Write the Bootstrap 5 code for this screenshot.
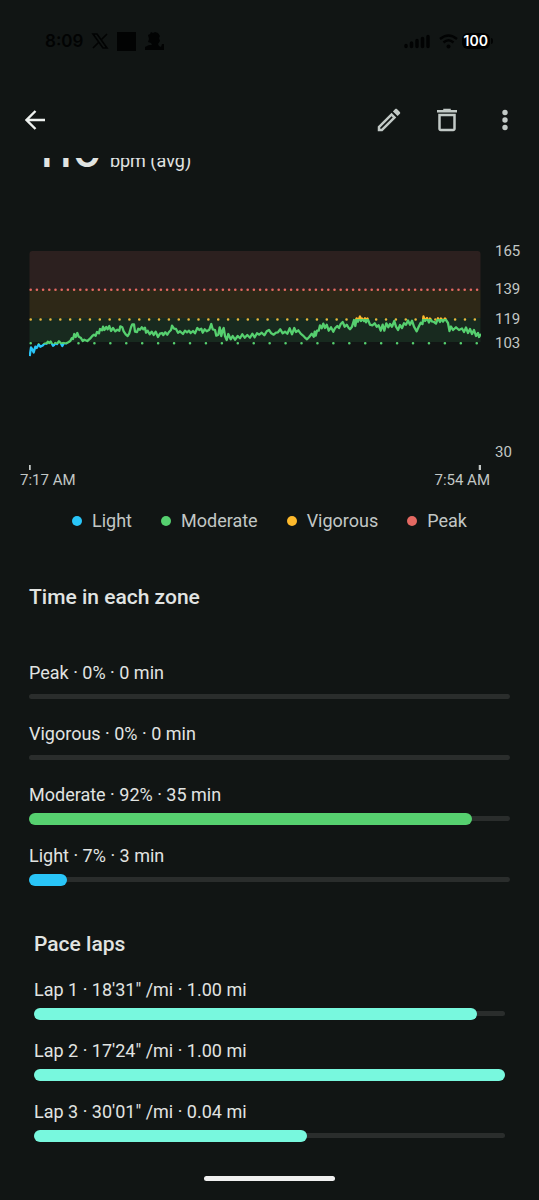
<!DOCTYPE html>
<html lang="en" data-bs-theme="dark">
<head>
<meta charset="utf-8">
<meta name="viewport" content="width=device-width, initial-scale=1">
<title>Heart rate</title>
<link href="https://cdn.jsdelivr.net/npm/bootstrap@5.3.0/dist/css/bootstrap.min.css" rel="stylesheet">
<style>
  body { background: #111514; color: #e1e4e2; font-family: Roboto, "Liberation Sans", sans-serif; font-size: 18px; line-height: 24px; }
  svg { display: block; }
  .status { height: 82px; padding: 0 46px 0 45px; color: #020303; }
  .clock { font: 600 17px/24px Inter, sans-serif; }
  .battery { background: #000; color: #fff; font: 600 14px/16px Inter, sans-serif; border-radius: 6px; padding: 0 2px; }
  .toolbar { height: 76px; padding: 0 19px 0 20px; color: #c2c9c6; }
  .toolbar .btn { color: inherit; border: 0; padding: 0; width: 30px; height: 30px; display: grid; place-items: center; }
  .toolbar .back { color: #eef1ef; }
  .toolbar .tools { gap: 28px; }
  .average { height: 24px; padding-left: 34px; }
  .average .value { font: 500 46px/64px Inter, sans-serif; }
  .chart { margin-top: 57px; color: #c2c7c5; font-size: 15px; }
  .plot { padding: 12px 0 0 29px; }
  .plot svg { width: 100%; height: 220px; }
  .scale { grid-template-rows: 38px 30px 24px 109px 24px; width: 58px; padding-left: 14px; }
  .times { padding: 0 49px 0 20px; line-height: 18px; }
  .legend-row { gap: 29px; margin-top: 20px; color: #c2c7c5; }
  .legend-row li { gap: 10px; }
  .dot { width: 10px; height: 10px; border-radius: 50%; }
  .zones { padding: 0 29px; margin-top: 52px; }
  .laps { padding: 0 34px; margin-top: 50px; }
  h2 { font-size: 21px; line-height: 24px; font-weight: 500; margin: 0; color: #e1e4e2; }
  .zones h2 { margin-bottom: 52px; }
  .laps h2 { margin-bottom: 22px; }
  .bars { gap: 23px; }
  .bars .progress { height: 5px; margin-top: 9px; overflow: visible; align-items: center; background: #2a2d2c; border-radius: 3px; }
  .bars .progress-bar { height: 12px; border-radius: 6px; }
  .light { background: #29c5f8; }
  .moderate { background: #56d06f; }
  .vigorous { background: #fdb92c; }
  .peak { background: #e46962; }
  .pace { background: #78f8de; }
  .home { width: 131px; height: 5px; border-radius: 3px; background: #f0f0f0; margin: 38px auto 19px; }
</style>
</head>
<body>
<div class="status d-flex align-items-center justify-content-between">
  <div class="d-flex align-items-center">
    <span class="clock me-2">8:09</span>
    <svg width="18" height="18" viewBox="0 0 18 18" class="me-2" aria-hidden="true"><path d="M2 2h4l10 14h-4zM16 2 10 8M8 10l-6 6" fill="none" stroke="currentColor" stroke-width="1.6"/></svg>
    <svg width="19" height="19" class="me-2" aria-hidden="true"><path d="M0 0h19v19H0z" fill="currentColor"/></svg>
    <svg width="20" height="20" viewBox="0 0 20 20" aria-hidden="true"><path d="M1 19v-3l4-2 3 0-1-2-3-1 1-3-1-4 2-1 1-2 2 1 2-1 3 1 2 3-1 2 1 3-2 3 1 2 2 1 1-3 2 0v6z" fill="currentColor"/></svg>
  </div>
  <div class="d-flex align-items-center">
    <svg width="27" height="15" viewBox="0 0 27 15" class="me-2" aria-hidden="true"><path d="M2 12.500v-1M7.500 12.500V9M13 12.500V6.500M18.500 12.500V4.500M24 12.500V2.500" stroke="currentColor" stroke-width="3.500" stroke-linecap="round"/></svg>
    <svg width="19" height="15" viewBox="0 0 19 15" class="me-1" aria-hidden="true"><path d="M1 5Q9.500-2 18 5M4.500 8.500Q9.500 4 14.500 8.500" fill="none" stroke="currentColor" stroke-width="2.400"/><circle cx="9.500" cy="12.500" r="2" fill="currentColor"/></svg>
    <span class="battery">100</span>
    <svg width="3" height="6" viewBox="0 0 3 6" aria-hidden="true"><path d="M1 0q2 0 2 3t-2 3z" fill="currentColor"/></svg>
  </div>
</div>

<header class="toolbar d-flex align-items-center justify-content-between">
  <button class="btn back" type="button" aria-label="Back"><svg width="20" height="20" viewBox="0 0 20 20"><path d="M20 10H2M10.500 1 1.500 10l9 9" fill="none" stroke="currentColor" stroke-width="2.400"/></svg></button>
  <div class="tools d-flex">
    <button class="btn" type="button" aria-label="Edit"><svg width="30" height="30" viewBox="0 0 24 24"><path fill="currentColor" d="m14.060 9.020.920.920L5.920 19H5v-.920zM17.660 3c-.250 0-.510.100-.700.290l-1.830 1.830 3.750 3.750 1.830-1.830a1 1 0 0 0 0-1.410l-2.340-2.340c-.200-.200-.450-.290-.710-.290m-3.600 3.190L3 17.250V21h3.750L17.810 9.940z"/></svg></button>
    <button class="btn" type="button" aria-label="Delete"><svg width="30" height="30" viewBox="0 0 24 24"><path fill="currentColor" d="M15 4V3H9v1H4v2h16V4zM5 7v12c0 1.100.900 2 2 2h10c1.100 0 2-.900 2-2V7zm2 2h10v10H7z"/></svg></button>
    <button class="btn" type="button" aria-label="More options"><svg width="8" height="22" viewBox="0 0 8 22"><g fill="currentColor"><circle cx="4" cy="3.500" r="2.700"/><circle cx="4" cy="11" r="2.700"/><circle cx="4" cy="18.500" r="2.700"/></g></svg></button>
  </div>
</header>

<main>
  <div class="average d-flex align-items-end overflow-hidden">
    <div class="d-flex align-items-baseline"><span class="value me-2">110</span><span>bpm (avg)</span></div>
  </div>

  <section class="chart" aria-label="Heart rate over time">
    <div class="d-flex">
      <div class="plot flex-grow-1">
        <svg viewBox="29 251 452 220" preserveAspectRatio="none" role="img" aria-label="Heart rate between 95 and 121 bpm">
          <defs>
            <linearGradient id="zone" gradientUnits="userSpaceOnUse" x1="0" y1="251" x2="0" y2="371">
              <stop offset=".570" stop-color="#fdb92c"/><stop offset=".570" stop-color="#56d06f"/>
              <stop offset=".773" stop-color="#56d06f"/><stop offset=".773" stop-color="#29c5f8"/>
            </linearGradient>
          </defs>
          <path d="M29.500 290V254q0-3 3-3h445q3 0 3 3v36z" fill="#2c201f"/>
          <path d="M29.500 290h451v28h-451z" fill="#2e2817"/>
          <path d="M29.500 318h451v24h-451z" fill="#182a1f"/>
          <g fill="none" stroke-width="2.600" stroke-linecap="round">
            <path d="M30.700 289.700H480" stroke="#e46962" stroke-dasharray="0 6.200"/>
            <path d="M30.700 319.500H480" stroke="#e9b53a" stroke-dasharray="0 9.870"/>
            <path d="M30.700 343.300H480" stroke="#56d06f" stroke-dasharray="0 15.930"/>
          </g>
          <polyline fill="none" stroke="url(#zone)" stroke-width="2.300" stroke-linejoin="round" points="29.7,356 31,347.300 32.300,349.300 33.700,352.500 35.300,346.700 36.700,348 38.700,344.300 40.300,346.700 42.700,345.500 44.300,343.700 46.700,343.500 47.700,341.700 49.300,343 50.700,341.500 53,345.700 54,345 55.300,343 57,344 59,341.300 60.700,343 62.300,346 64,343 66,343.500 68.300,342.300 70.300,341 71.700,338.300 73,339 74.300,334 75.700,337 77.300,333 78.700,336.700 80.700,337.700 82.700,341 84.300,339.700 87.300,341 90,338.700 92.300,336 94,334.700 95.700,335.700 97,332 99,333.300 100,329 102,330.300 103,326.700 104.300,330 106.300,327 107.700,329.300 109.300,326 111,331 113,328 115.300,331.300 117.300,329.700 119.300,330.700 120.300,326.300 122.300,327.300 123.700,331.300 125.700,334.300 127.700,336 129.300,333.300 131,327.300 132.300,324.300 134,324.300 135,331.700 137,332 138.300,328.700 140,329.700 141.700,327.300 143.300,329.300 145,327.700 146,332.700 147.700,330.700 149.700,334.300 151.700,331.700 153.700,335 155.700,331.700 158,337 160,333.700 162,333 163.300,335 165.300,332.300 167.300,334.700 169,332 171,330 172,325.700 174,328.700 176,329 178,332.700 180,331.300 183,334 185,330.700 187,332.300 189,330.700 190.700,333 193,331 195,333.300 197.300,328 199.300,330 201.300,328.700 202.700,332.700 204.700,329.300 206.700,331.300 209.300,329.700 211.300,324 212.700,329.300 215,330 216.300,335.700 218.300,334.700 219.700,327.300 221.300,336 222.700,330 223.700,328 225,336 226.700,340 228.300,334 230.700,339.300 232.700,336 235,339.700 237.700,336 240,338.300 242.300,334.300 244.700,337.700 247.300,335 250,337.700 252.300,333.700 254.700,337.300 257,333.300 259.300,334.700 261.700,332.700 264.300,335.300 266.700,331.300 269,330 271.300,333.300 273.700,334.700 276,332.700 278,332.300 280.300,329.300 282.700,333.300 285,331.700 287.300,333.700 289.700,328.300 292,334.300 294.300,328 296,332 298.300,330.300 300.700,333.700 302.700,335.300 304.700,337.300 307,339.300 309,337.300 311.700,333.700 313.700,336.700 314.700,331.700 315.700,335.700 317,330.700 318.700,330.700 320,325.300 321.700,328.300 323.300,323.700 325,328 326.700,324.700 328.700,330.700 331,327.300 333.300,331.700 335,328.300 337.300,326 339,328 340.700,324 342.700,322 344.700,326.700 346.700,324.700 348.700,328 350,329.300 352,326.700 354,320 355.300,326 356.700,318.300 358,321.700 360,316.500 361,321 362,318.500 364,321 365,318.300 366,322.300 367.500,318.500 370,324.700 372.300,325.300 374.700,323.300 376.700,326.700 378.700,325.300 380.700,330.700 382.700,324.700 384.300,330.700 386.300,323.300 388.300,327.300 390,324 392,326.700 394.300,321 396,326.700 398,330 400,325 402,328 404,323.300 406,324.700 408,320.500 410,324.700 412,320.700 414,326.700 416.700,331.300 418.700,326.700 420.700,322.700 422.500,324 423.500,316.500 425,321 427,318 429,322.500 430,318.500 432,321.500 434,322 436,323.500 438,318.300 440,322 441,318.500 443,321.500 445,318.500 447,321.500 448,323 449.500,331 451,326.500 453,330 456,327.300 459,330 462,328.500 464,332 466,327.500 468,333 470,329 472,334 474,330 476,336 478,333 479,337 481,334"/>
          <path d="M29.500 465v5M480 465v5" stroke="#c2c7c5" stroke-width="2.500"/>
        </svg>
      </div>
      <div class="scale d-grid flex-shrink-0 align-content-start"><span>165</span><span>139</span><span>119</span><span>103</span><span>30</span></div>
    </div>
    <div class="times d-flex justify-content-between"><span>7:17 AM</span><span>7:54 AM</span></div>
  </section>

  <ul class="legend-row list-unstyled d-flex justify-content-center mb-0">
    <li class="d-flex align-items-center"><span class="dot light"></span>Light</li>
    <li class="d-flex align-items-center"><span class="dot moderate"></span>Moderate</li>
    <li class="d-flex align-items-center"><span class="dot vigorous"></span>Vigorous</li>
    <li class="d-flex align-items-center"><span class="dot peak"></span>Peak</li>
  </ul>

  <section class="zones">
    <h2>Time in each zone</h2>
    <div class="bars d-flex flex-column">
      <div><div>Peak · 0% · 0 min</div><div class="progress" role="progressbar" aria-label="Peak"></div></div>
      <div><div>Vigorous · 0% · 0 min</div><div class="progress" role="progressbar" aria-label="Vigorous"></div></div>
      <div><div>Moderate · 92% · 35 min</div><div class="progress" role="progressbar" aria-label="Moderate"><div class="progress-bar moderate" style="width:92%"></div></div></div>
      <div><div>Light · 7% · 3 min</div><div class="progress" role="progressbar" aria-label="Light"><div class="progress-bar light" style="width:8%"></div></div></div>
    </div>
  </section>

  <section class="laps">
    <h2>Pace laps</h2>
    <div class="bars d-flex flex-column">
      <div><div>Lap 1 · 18'31" /mi · 1.00 mi</div><div class="progress" role="progressbar" aria-label="Lap 1"><div class="progress-bar pace" style="width:94%"></div></div></div>
      <div><div>Lap 2 · 17'24" /mi · 1.00 mi</div><div class="progress" role="progressbar" aria-label="Lap 2"><div class="progress-bar pace" style="width:100%"></div></div></div>
      <div><div>Lap 3 · 30'01" /mi · 0.04 mi</div><div class="progress" role="progressbar" aria-label="Lap 3"><div class="progress-bar pace" style="width:58%"></div></div></div>
    </div>
  </section>
</main>
<div class="home"></div>
<script src="https://cdn.jsdelivr.net/npm/bootstrap@5.3.0/dist/js/bootstrap.bundle.min.js"></script>
</body>
</html>
